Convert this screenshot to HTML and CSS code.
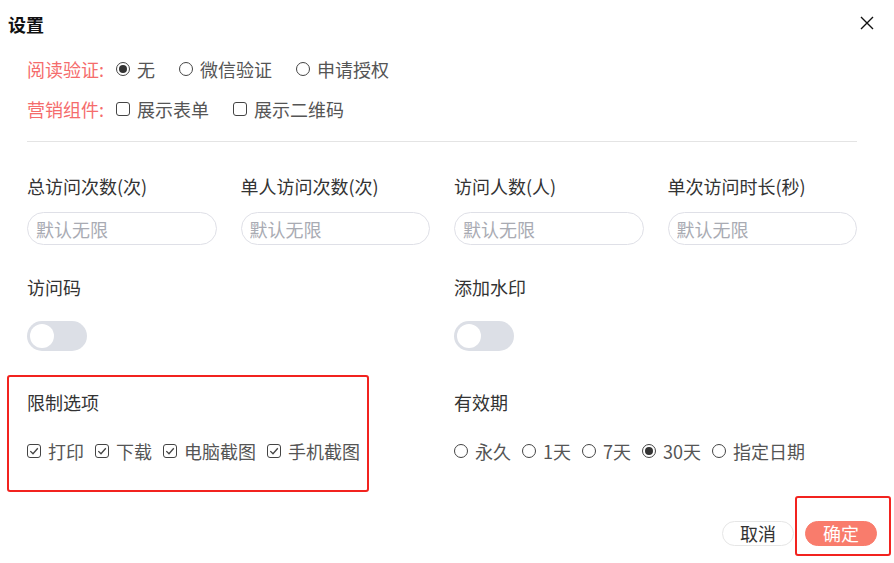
FILE: index.html
```html
<!DOCTYPE html>
<html lang="zh-CN">
<head>
<meta charset="utf-8">
<title>设置</title>
<link rel="stylesheet" href="styles.css">
</head>
<body>
<div class="dialog">
  <header class="head">
    <h1 class="title">设置</h1>
    <button class="close" aria-label="关闭">
      <svg width="14" height="14" viewBox="0 0 14 14"><path d="M1 1L13 13M13 1L1 13" stroke="#111" stroke-width="1.4" fill="none"/></svg>
    </button>
  </header>

  <div class="body">
    <div class="opt-row">
      <span class="opt-label">阅读验证:</span>
      <label class="choice"><span class="radio on"></span>无</label>
      <label class="choice"><span class="radio"></span>微信验证</label>
      <label class="choice"><span class="radio"></span>申请授权</label>
    </div>
    <div class="opt-row opt-row2">
      <span class="opt-label">营销组件:</span>
      <label class="choice"><span class="box"></span>展示表单</label>
      <label class="choice"><span class="box"></span>展示二维码</label>
    </div>

    <hr class="divider">

    <div class="grid4">
      <div class="field"><div class="label">总访问次数(次)</div><input class="input" placeholder="默认无限"></div>
      <div class="field"><div class="label">单人访问次数(次)</div><input class="input" placeholder="默认无限"></div>
      <div class="field"><div class="label">访问人数(人)</div><input class="input" placeholder="默认无限"></div>
      <div class="field"><div class="label">单次访问时长(秒)</div><input class="input" placeholder="默认无限"></div>
    </div>

    <div class="grid2 toggles">
      <div class="field"><div class="label">访问码</div><span class="switch"><span class="knob"></span></span></div>
      <div class="field"><div class="label">添加水印</div><span class="switch"><span class="knob"></span></span></div>
    </div>

    <div class="grid2 limits">
      <div class="field">
        <div class="label">限制选项</div>
        <div class="choices tight">
          <label class="choice"><span class="box checked"><svg viewBox="0 0 14 14" width="14" height="14"><path d="M3.3 7.1L6 9.8L10.8 4.3" stroke="#444" stroke-width="1.3" fill="none"/></svg></span>打印</label>
          <label class="choice"><span class="box checked"><svg viewBox="0 0 14 14" width="14" height="14"><path d="M3.3 7.1L6 9.8L10.8 4.3" stroke="#444" stroke-width="1.3" fill="none"/></svg></span>下载</label>
          <label class="choice"><span class="box checked"><svg viewBox="0 0 14 14" width="14" height="14"><path d="M3.3 7.1L6 9.8L10.8 4.3" stroke="#444" stroke-width="1.3" fill="none"/></svg></span>电脑截图</label>
          <label class="choice"><span class="box checked"><svg viewBox="0 0 14 14" width="14" height="14"><path d="M3.3 7.1L6 9.8L10.8 4.3" stroke="#444" stroke-width="1.3" fill="none"/></svg></span>手机截图</label>
        </div>
      </div>
      <div class="field">
        <div class="label">有效期</div>
        <div class="choices tight">
          <label class="choice"><span class="radio"></span>永久</label>
          <label class="choice"><span class="radio"></span>1天</label>
          <label class="choice"><span class="radio"></span>7天</label>
          <label class="choice"><span class="radio on"></span>30天</label>
          <label class="choice"><span class="radio"></span>指定日期</label>
        </div>
      </div>
    </div>
  </div>

  <footer class="foot">
    <button class="btn btn-cancel">取消</button>
    <button class="btn btn-ok">确定</button>
  </footer>

  <div class="mark mark-limits"></div>
  <div class="mark mark-ok"></div>
</div>
</body>
</html>
```

FILE: styles.css
```css
* { box-sizing: border-box; }
html, body { margin: 0; padding: 0; background: #fff; }
body {
  font-family: "Noto Sans CJK SC", "Noto Sans", sans-serif;
  color: #333;
  font-size: 18px;
}
.dialog {
  position: relative;
  width: 894px;
  height: 563px;
  background: #fff;
}
.head {
  display: flex;
  justify-content: space-between;
  align-items: center;
  padding: 12px 20px 0 8px;
  height: 36px;
}
.title {
  margin: 0;
  font-size: 18px;
  line-height: 24px;
  font-weight: 700;
  color: #111;
}
.close {
  border: 0;
  background: none;
  padding: 0;
  width: 14px;
  height: 14px;
  display: flex;
  margin-top: -2px;
}
.body {
  padding: 21px 37px 0 27px;
}
.opt-row {
  display: flex;
  align-items: center;
  height: 24px;
  line-height: 24px;
}
.opt-row2 { margin-top: 16px; }
.opt-label {
  color: #f56c6c;
  margin-right: 12px;
}
.choice {
  display: inline-flex;
  align-items: center;
  color: #555;
  margin-right: 24px;
  white-space: nowrap;
}
.choices {
  display: flex;
  align-items: center;
  height: 24px;
  margin-top: 25px;
}
.choices.tight .choice { margin-right: 11px; }
.radio {
  flex: none;
  width: 14px;
  height: 14px;
  border: 1.4px solid #444;
  border-radius: 50%;
  margin-right: 7px;
  display: inline-flex;
  align-items: center;
  justify-content: center;
}
.radio.on::after {
  content: "";
  width: 8px;
  height: 8px;
  border-radius: 50%;
  background: #333;
}
.box {
  flex: none;
  width: 14px;
  height: 14px;
  border: 1.4px solid #444;
  border-radius: 3px;
  margin-right: 7px;
  display: inline-flex;
  align-items: center;
  justify-content: center;
  overflow: hidden;
}
.box svg { flex: none; }
.divider {
  border: 0;
  border-top: 1px solid #e4e4e4;
  margin: 20px 0 0 0;
  height: 0;
}
.grid4 {
  display: grid;
  grid-template-columns: repeat(4, 1fr);
  column-gap: 24px;
  margin-top: 32px;
}
.grid2 {
  display: grid;
  grid-template-columns: 1fr 1fr;
  column-gap: 24px;
}
.field { display: flex; flex-direction: column; align-items: flex-start; }
.label {
  line-height: 24px;
  height: 24px;
  color: #333;
  font-size: 18px;
}
.input {
  margin-top: 14px;
  width: 100%;
  height: 33px;
  border: 1.6px solid #dfe0e7;
  border-radius: 17px;
  padding: 0 8px;
  font-family: inherit;
  font-size: 18px;
  color: #333;
  outline: none;
  background: #fff;
}
.input::placeholder { color: #a9abb3; }
.toggles { margin-top: 30px; }
.switch {
  margin-top: 22px;
  width: 60px;
  height: 30px;
  border-radius: 15px;
  background: #dcdfe6;
  display: flex;
  align-items: center;
  padding-left: 3px;
}
.knob {
  width: 24px;
  height: 24px;
  border-radius: 50%;
  background: #fff;
}
.limits { margin-top: 39px; }
.foot {
  display: flex;
  justify-content: flex-end;
  gap: 11px;
  padding: 58px 17px 0 0;
}
.btn {
  width: 72px;
  height: 25px;
  border-radius: 13px;
  font-family: inherit;
  font-size: 18px;
  line-height: 23px;
  padding: 0;
}
.btn-cancel {
  background: #fff;
  border: 1px solid #e6e6e6;
  color: #333;
}
.btn-ok {
  background: #f97c6c;
  border: 1px solid #f97c6c;
  color: #fff;
}
.mark {
  position: absolute;
  border: 2px solid #f2231f;
  border-radius: 3px;
  pointer-events: none;
}
.mark-limits { left: 7px; top: 375px; width: 362px; height: 117px; }
.mark-ok { left: 795px; top: 496px; width: 96px; height: 60px; }
```
